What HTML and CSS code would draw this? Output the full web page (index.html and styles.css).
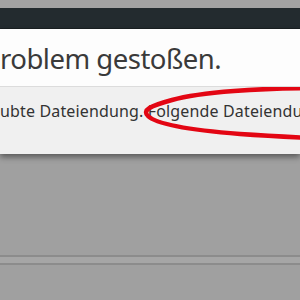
FILE: index.html
```html
<!DOCTYPE html>
<html lang="de">
<head>
<meta charset="utf-8">
<link rel="stylesheet" href="styles.css">
</head>
<body>
<div class="top-strip"></div>
<div class="titlebar"></div>
<div class="dialog">
  <div class="dialog-head">
    <h1 class="title">roblem gestoßen.</h1>
  </div>
  <div class="dialog-body">
    <p class="msg">ubte Dateiendung. Folgende Dateiendungen</p>
    <svg class="mark" width="300" height="60" viewBox="0 0 300 60">
      <path d="M320 2 C 260 2, 200 6, 172 14 C 150 20, 142 24, 148 30 C 156 38, 190 44, 240 48 C 270 50, 290 51, 310 52" fill="none" stroke="#e30613" stroke-width="4.5" stroke-linecap="round"/>
    </svg>
  </div>
</div>
<div class="page">
  <div class="rule"></div>
</div>
</body>
</html>
```
FILE: styles.css
```css
html, body {
  margin: 0;
  padding: 0;
}
body {
  width: 300px;
  height: 300px;
  overflow: hidden;
  background: #a0a0a0;
  font-family: "Noto Sans", "Open Sans", sans-serif;
}
.top-strip {
  height: 8px;
  background: #a3a3a3;
}
.titlebar {
  height: 20px;
  background: #232b2f;
  border-bottom: 1px solid #1a2023;
}
.dialog {
  box-shadow: 0 3px 6px rgba(0,0,0,0.45);
  position: relative;
}
.dialog-head {
  height: 57px;
  background: #fdfdfd;
  border-bottom: 1px solid #dcdcdc;
  display: flex;
  align-items: flex-end;
}
.title {
  margin: 0 0 9px 0;
  font-weight: 400;
  font-size: 27.5px;
  line-height: 36px;
  color: #3a3a3a;
  white-space: nowrap;
  letter-spacing: -0.5px;
}
.dialog-body {
  height: 67px;
  background: #f0f0f0;
  position: relative;
  overflow: hidden;
}
.msg {
  margin: 14px 0 0 0;
  font-size: 16px;
  line-height: 20px;
  color: #333;
  white-space: nowrap;
  letter-spacing: 0.15px;
}
.mark {
  position: absolute;
  left: 0;
  top: -1px;
}
.page {
  padding-top: 101px;
}
.rule {
  height: 6px;
  border-top: 2px solid #8c8c8c;
  border-bottom: 2px solid #8c8c8c;
  background: #a6a6a6;
}
```
